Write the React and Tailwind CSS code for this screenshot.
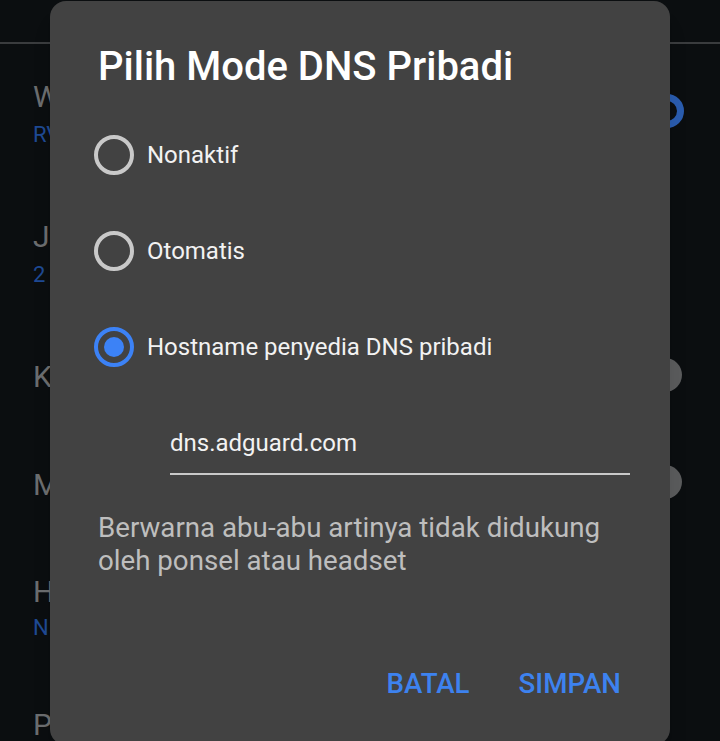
import React from "react";

const bgRows = [
  { title: "W", sub: "RV", top: "mt-[34px]", subTop: "mt-[6px]" },
  { title: "J", sub: "2", top: "mt-[70px]", subTop: "mt-[6px]" },
  { title: "K", sub: "", top: "mt-[70px]" },
  { title: "M", sub: "", top: "mt-[70px]" },
  { title: "H", sub: "N", top: "mt-[69px]", subTop: "mt-[4px]" },
  { title: "P", sub: "", top: "mt-[65px]" },
];

function Radio({ checked, label }) {
  return (
    <div className="flex items-center h-[96px]">
      <span
        className={`w-[40px] h-[40px] rounded-full border-[4px] flex items-center justify-center ${
          checked ? "border-[#3c82f6]" : "border-[#c9c9c9]"
        }`}
      >
        {checked && <span className="w-[20px] h-[20px] rounded-full bg-[#3c82f6]" />}
      </span>
      <span className="ml-[13px] text-[24px] text-[#f2f2f2] leading-none">{label}</span>
    </div>
  );
}

export default function App() {
  return (
    <div
      className="relative w-[720px] h-[741px] overflow-hidden bg-[#0b0e10]"
      style={{ fontFamily: "Roboto, 'Noto Sans', sans-serif" }}
    >
      {/* dimmed settings page behind */}
      <div className="h-[44px] border-b-2 border-[#3a3c3e]" />
      <div className="px-[33px]">
        {bgRows.map((r) => (
          <div key={r.title} className={r.top}>
            <div className="text-[30px] leading-[38px] text-[#6b6d6f]">{r.title}</div>
            {r.sub && (
              <div className={`${r.subTop} text-[22px] leading-[26px] text-[#1f4a94]`}>{r.sub}</div>
            )}
          </div>
        ))}
      </div>
      <span className="absolute left-[650px] top-[94px] w-[34px] h-[34px] rounded-full border-[7px] border-[#2a5cae]" />
      <span className="absolute left-[648px] top-[358px] w-[34px] h-[34px] rounded-full bg-[#5a5b5c]" />
      <span className="absolute left-[648px] top-[465px] w-[34px] h-[34px] rounded-full bg-[#5a5b5c]" />

      {/* dialog */}
      <div className="absolute left-[50px] top-[1px] w-[620px] h-[744px] rounded-[16px] bg-[#424242] shadow-xl">
        <h2 className="ml-[48px] mt-[42px] text-[40px] font-medium text-white leading-[48px]">
          Pilih Mode DNS Pribadi
        </h2>
        <div className="ml-[44px] mt-[16px]">
          <Radio label="Nonaktif" />
          <Radio label="Otomatis" />
          <Radio checked label="Hostname penyedia DNS pribadi" />
        </div>
        <div className="ml-[120px] mr-[40px] mt-[30px] h-[50px] pb-[12px] border-b-2 border-[#c9c9c9] flex items-center">
          <span className="text-[24px] text-[#f2f2f2] leading-none">dns.adguard.com</span>
        </div>
        <p className="ml-[48px] mt-[36px] text-[27.7px] leading-[33px] text-[#bebebe]">
          Berwarna abu-abu artinya tidak didukung
          <br />
          oleh ponsel atau headset
        </p>
        <div className="flex justify-end gap-[49px] mr-[49px] mt-[93px] text-[27.7px] font-medium text-[#3d82ef] leading-none">
          <span>BATAL</span>
          <span>SIMPAN</span>
        </div>
      </div>
    </div>
  );
}
